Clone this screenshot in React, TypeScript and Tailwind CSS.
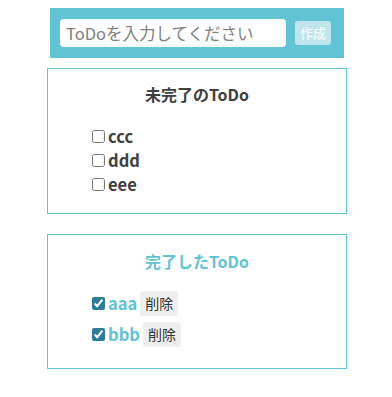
const font = { fontFamily: '"Noto Sans CJK JP", "Noto Sans", sans-serif' };

const incomplete = ["ccc", "ddd", "eee"];
const complete = ["aaa", "bbb"];

export default function App() {
  return (
    <div className="pt-2 text-[#404040]" style={font}>
      <div className="ml-[50px] flex h-[50px] w-[294px] items-center bg-[#62c3d4] pl-[10px]">
        <input
          className="h-[28px] w-[226px] rounded-[4px] bg-white px-[6px] text-[16.5px] text-[#333] outline-none placeholder:text-[#808080]"
          placeholder="ToDoを入力してください"
        />
        <button className="ml-[9px] h-[24px] w-[36px] rounded-[3px] bg-[#bfe6ee] text-[13px] text-white">
          作成
        </button>
      </div>

      <div className="ml-[47px] mt-[10px] h-[146px] w-[300px] border border-[#62c3d4] pt-[13px]">
        <p className="text-center text-[16px] font-bold leading-[24px] text-[#404040]">
          未完了のToDo
        </p>
        <ul className="mt-[18px] pl-[40px]">
          {incomplete.map((t) => (
            <li key={t} className="flex h-[24px] items-center">
              <input type="checkbox" className="ml-[4px] mr-[3px] h-[13px] w-[13px]" />
              <span className="text-[16.5px] font-bold">{t}</span>
            </li>
          ))}
        </ul>
      </div>

      <div className="ml-[47px] mt-[20px] h-[135px] w-[300px] border border-[#62c3d4] pt-[14px]">
        <p className="text-center text-[16px] font-bold leading-[24px] text-[#62c3d4]">
          完了したToDo
        </p>
        <ul className="mt-[15px] pl-[40px]">
          {complete.map((t) => (
            <li key={t} className="flex h-[31px] items-center">
              <input
                type="checkbox"
                defaultChecked
                className="ml-[4px] mr-[3px] h-[13px] w-[13px] accent-[#2d7d9a]"
              />
              <span className="text-[16.5px] font-bold text-[#62c3d4]">{t}</span>
              <button className="ml-[3px] h-[25px] rounded-[3px] bg-[#efefef] px-[5px] text-[14px] text-[#333]">
                削除
              </button>
            </li>
          ))}
        </ul>
      </div>
    </div>
  );
}
